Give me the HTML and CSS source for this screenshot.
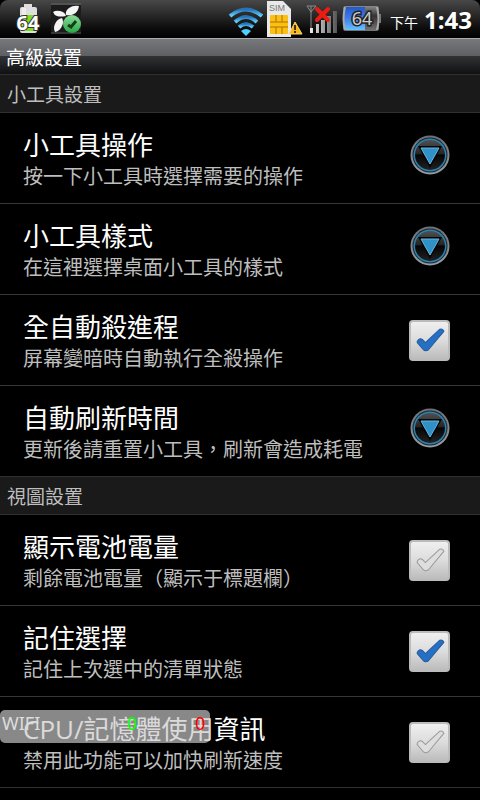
FILE: index.html
```html
<!DOCTYPE html>
<html lang="zh-Hant">
<head>
<meta charset="utf-8">
<title>高級設置</title>
<link rel="stylesheet" href="styles.css">
</head>
<body>
<svg class="defs" aria-hidden="true">
  <defs>
    <linearGradient id="metal" x1="0" y1="0" x2="0" y2="1"><stop offset="0" stop-color="#6d7175"/><stop offset="1" stop-color="#9a9da0"/></linearGradient>
    <linearGradient id="dark" x1="0" y1="0" x2="0" y2="1"><stop offset="0" stop-color="#505050"/><stop offset=".45" stop-color="#262626"/><stop offset=".5" stop-color="#050505"/><stop offset="1" stop-color="#222"/></linearGradient>
    <linearGradient id="wifi" x1="0" y1="0" x2="0" y2="1"><stop offset="0" stop-color="#2672b4"/><stop offset="1" stop-color="#5fd0ff"/></linearGradient>
    <linearGradient id="cell" x1="0" y1="0" x2="0" y2="1"><stop offset="0" stop-color="#2459c8"/><stop offset=".5" stop-color="#3f7df0"/><stop offset="1" stop-color="#63c4ff"/></linearGradient>
    <linearGradient id="shell" x1="0" y1="0" x2="0" y2="1"><stop offset="0" stop-color="#8a8a8a"/><stop offset=".4" stop-color="#333"/><stop offset="1" stop-color="#777"/></linearGradient>
    <linearGradient id="bar" x1="0" y1="0" x2="1" y2="0"><stop offset="0" stop-color="#eee"/><stop offset="1" stop-color="#555"/></linearGradient>
    <linearGradient id="green" x1="0" y1="0" x2="0" y2="1"><stop offset="0" stop-color="#8fdc9b"/><stop offset="1" stop-color="#27a743"/></linearGradient>
    <symbol id="arrow" viewBox="0 0 40 40">
      <circle cx="20" cy="20" r="19.500" fill="url(#metal)"/>
      <circle cx="20" cy="20" r="17.500" fill="#15242e"/>
      <circle cx="20" cy="20" r="16.500" fill="#2c81b0"/>
      <circle cx="20" cy="20" r="15" fill="url(#dark)"/>
      <path d="M8 11h24L20 33z" fill="#050505"/>
      <path d="M11 13h18l-9 16z" fill="#2e91c8" stroke="#66b5df"/>
    </symbol>
  </defs>
</svg>
<header class="status">
  <div class="notes">
    <svg width="28" height="34" viewBox="0 0 28 34" role="img" aria-label="64">
      <path d="M10 4h8v3h3q2 0 2 2v22q0 2-2 2H8q-2 0-2-2V9q0-2 2-2h2z" fill="#dedede"/>
      <path d="M7 15h15v16H7z" fill="#79df1b"/><path d="M8 8h4v23H8z" fill="#fff" opacity=".45"/>
      <text x="14" y="30" text-anchor="middle" class="badge-num">64</text>
    </svg>
    <svg width="32" height="34" viewBox="0 0 32 34" aria-hidden="true">
      <path d="M1 4h30M1 33h30" stroke="#666"/><path d="M1 5h30v27H1z" fill="#1c1c1c"/>
      <path d="M3 12q3-2 7-1 5 1 6 5-6 1-9 0-3-1-4-4zM16 15q-1-4 3-7 4-3 10-2-1 6-5 8-4 2-8 1zM12 18q2 4 0 8-2 5-7 6-2-4 0-8 2-5 7-6z" fill="#f5f5f5"/>
      <circle cx="22" cy="24" r="9" fill="url(#green)"/>
      <path d="M18 25l3 2 5-6" fill="none" stroke="#143d1c" stroke-width="3"/>
    </svg>
  </div>
  <div class="system">
    <svg width="36" height="36" viewBox="0 0 36 36" role="img" aria-label="Wi-Fi">
      <g fill="none" stroke="url(#wifi)" stroke-width="4"><path d="M2 15q16-13 32 0"/><path d="M7 21q11-10 22 0"/><path d="M11 26q7-6 14 0"/></g>
      <path d="M13 30q5-4 10 0l-5 5z" fill="#4fcfff"/>
    </svg>
    <svg width="38" height="38" viewBox="0 0 38 38" role="img" aria-label="SIM">
      <path d="M1 1h16l8 8v28H1z" fill="#e9e9ea"/>
      <text x="3" y="11" class="sim">SIM</text>
      <rect x="4" y="15" width="18" height="19" rx="1" fill="#fdbf14"/>
      <path d="M4 22h6M4 27h18M22 22h-6M10 15v7h6v-7M10 27v7M16 27v7" fill="none" stroke="#a87400"/>
      <path d="M29 22l7 12H23z" fill="#f7b718" stroke="#f7d77c" stroke-linejoin="round"/>
      <path d="M29 25v5m0 1v2" stroke="#4a3300" stroke-width="2"/>
    </svg>
    <svg width="34" height="32" viewBox="0 0 34 32" role="img" aria-label="無訊號">
      <path d="M1 3h9L5 9zM5 3v26" fill="none" stroke="#8b8b8b"/>
      <path d="M4 25h3v5H4zM10 21h3v9h-3zM15 17h4v13h-4zM21 13h4v17h-4zM27 8h4v22h-4z" fill="url(#bar)"/>
      <path d="M11 6l11 11M22 6L11 17" stroke="#ec1c12" stroke-width="4" stroke-linecap="round"/>
    </svg>
    <svg width="40" height="30" viewBox="0 0 40 30" role="img" aria-label="電量 64">
      <rect x="1" y="2" width="36" height="25" rx="3" fill="url(#shell)"/>
      <path d="M3 3h20v23H3q-2-12 0-23z" fill="url(#cell)"/>
      <path d="M3 3q-3 12 0 23M35 3q3 12 0 23" fill="none" stroke="#aaa" stroke-width="2"/><path d="M38 10v9" stroke="#777" stroke-width="2"/>
      <text x="20" y="21" text-anchor="middle" class="cell-num">64</text>
    </svg>
    <span class="ampm">下午</span><time class="clock">1:43</time>
  </div>
</header>
<h1 class="titlebar">高級設置</h1>
<main>
  <section>
    <h2 class="group">小工具設置</h2>
    <ul class="list">
      <li><button class="row" type="button"><span class="text"><span class="name">小工具操作</span><span class="note">按一下小工具時選擇需要的操作</span></span><svg class="arrow" aria-hidden="true"><use href="#arrow"/></svg></button></li>
      <li><button class="row" type="button"><span class="text"><span class="name">小工具樣式</span><span class="note">在這裡選擇桌面小工具的樣式</span></span><svg class="arrow" aria-hidden="true"><use href="#arrow"/></svg></button></li>
      <li><label class="row"><span class="text"><span class="name">全自動殺進程</span><span class="note">屏幕變暗時自動執行全殺操作</span></span><span class="check"><input type="checkbox" checked><svg viewBox="0 0 40 40" aria-hidden="true"><path d="M8 21q2-4 5-2l3 3L30 9q3-1 4 2L19 29q-3 2-5 0L8 22z"/></svg></span></label></li>
      <li><button class="row" type="button"><span class="text"><span class="name">自動刷新時間</span><span class="note">更新後請重置小工具，刷新會造成耗電</span></span><svg class="arrow" aria-hidden="true"><use href="#arrow"/></svg></button></li>
    </ul>
  </section>
  <section>
    <h2 class="group">視圖設置</h2>
    <ul class="list">
      <li><label class="row"><span class="text"><span class="name">顯示電池電量</span><span class="note">剩餘電池電量（顯示于標題欄）</span></span><span class="check"><input type="checkbox"><svg viewBox="0 0 40 40" aria-hidden="true"><path d="M8 21q2-4 5-2l3 3L30 9q3-1 4 2L19 29q-3 2-5 0L8 22z"/></svg></span></label></li>
      <li><label class="row"><span class="text"><span class="name">記住選擇</span><span class="note">記住上次選中的清單狀態</span></span><span class="check"><input type="checkbox" checked><svg viewBox="0 0 40 40" aria-hidden="true"><path d="M8 21q2-4 5-2l3 3L30 9q3-1 4 2L19 29q-3 2-5 0L8 22z"/></svg></span></label></li>
      <li><label class="row"><span class="text"><span class="name">CPU/記憶體使用資訊</span><span class="note">禁用此功能可以加快刷新速度</span></span><span class="check"><input type="checkbox"><svg viewBox="0 0 40 40" aria-hidden="true"><path d="M8 21q2-4 5-2l3 3L30 9q3-1 4 2L19 29q-3 2-5 0L8 22z"/></svg></span></label>
        <div class="meter"><span>WIFI</span><span class="down">0</span><span class="up">0</span></div></li>
    </ul>
  </section>
</main>
</body>
</html>
```
FILE: styles.css
```css
* { box-sizing: border-box; }
body { margin: 0; min-height: 100vh; background: #000; color: #fff; font-family: "Open Sans", "Noto Sans CJK TC", sans-serif; }
.defs { position: absolute; width: 0; height: 0; }
.status { display: flex; justify-content: space-between; height: 38px; padding: 0 8px 0 14px; background: linear-gradient(#484848, #0c0c0c 75%, #000); border-radius: 8px 8px 0 0; }
.notes { display: flex; gap: 8px; }
.system { display: flex; align-items: center; gap: 2px; }
.badge-num { font: bold 20px "Noto Sans", sans-serif; fill: #fff; stroke: #333; stroke-width: 2px; paint-order: stroke; }
.sim { font: 9px "Liberation Sans", sans-serif; fill: #777; }
.cell-num { font: 18px "Noto Sans", sans-serif; fill: #ccc; stroke: #222; stroke-width: 3px; paint-order: stroke; }
.ampm { margin: 6px 4px 0 6px; font-size: 14px; }
.clock { font-family: "Noto Sans", sans-serif; font-size: 24px; font-weight: 700; }
.titlebar { height: 37px; margin: 0; padding: 0 6px; border-top: 1px solid #aaa; border-bottom: 1px solid #303030; background: linear-gradient(#77797c, #5d5f62 48%, #303234 49%, #101112); font-size: 19px; font-weight: 400; line-height: 38px; }
.group { height: 38px; margin: 0; padding: 1px 7px 0; border-bottom: 1px solid #303030; background: #1a1a1a; color: #bebebe; font-size: 19px; font-weight: 400; line-height: 38px; }
.list { margin: 0; padding: 0; list-style: none; }
.list li { position: relative; border-bottom: 1px solid #363636; }
.list li:last-child { border-bottom-color: #303030; }
.row { display: flex; align-items: center; justify-content: space-between; width: 100%; height: 90px; padding: 0 30px 6px 23px; border: 0; background: none; color: inherit; font: inherit; text-align: left; }
.text { padding-top: 9px; }
.name, .note { display: block; white-space: nowrap; }
.name { font-size: 26px; line-height: 34px; }
.note { color: #bebebe; font-size: 20px; line-height: 29px; }
.arrow { width: 40px; height: 40px; }
.check { position: relative; width: 41px; height: 41px; margin-top: 6px; }
.check input { appearance: none; display: block; width: 100%; height: 100%; margin: 0; border: 2px solid #bbb; border-radius: 4px; background: linear-gradient(#efefef, #dcdcdc 50%, #bcbcbc); }
.check svg { position: absolute; inset: 0; fill: #dedede; stroke: #999; pointer-events: none; }
.check input:checked + svg { fill: #2570c4; stroke: #255a9c; }
.meter { position: absolute; left: 0; top: 13px; display: grid; grid-template-columns: 125px 68px 1fr; width: 210px; height: 33px; padding-left: 2px; border-radius: 5px; background: rgb(200 200 200 / 68%); color: #ddd; font-family: "Noto Sans", sans-serif; font-size: 18px; line-height: 27px; }
.down { color: #0f0; }
.up { color: #f00; }
```
